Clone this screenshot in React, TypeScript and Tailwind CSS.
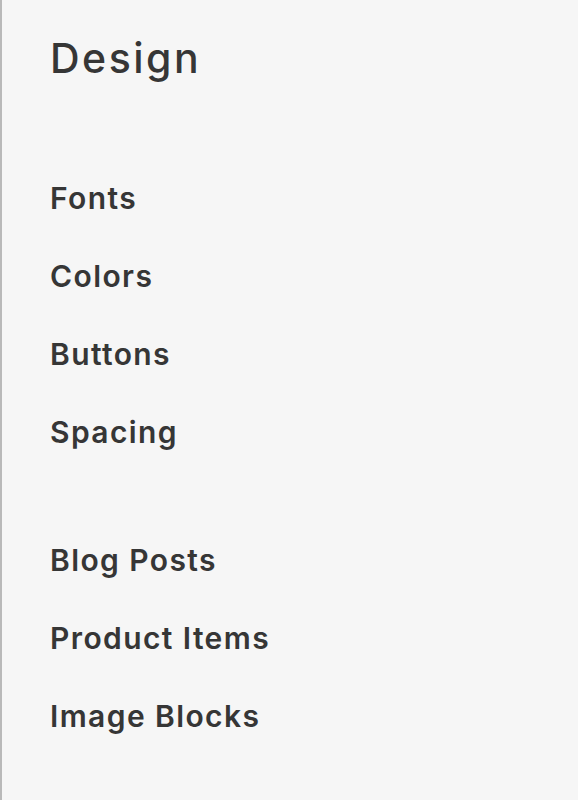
export default function App() {
  const first = ["Fonts", "Colors", "Buttons", "Spacing"];
  const second = ["Blog Posts", "Product Items", "Image Blocks"];
  return (
    <div className="h-[800px] w-[578px] border-l-2 border-[#b9b9b9] bg-[#f6f6f6] pl-[48px] pt-[38px] font-['Inter','Liberation_Sans',sans-serif] text-[#363636]">
      <h1 className="text-[41px] font-medium leading-[40px] tracking-[2.5px]">Design</h1>
      <ul className="mt-[81px]">
        {first.map((t) => (
          <li key={t} className="text-[30px] font-semibold leading-[78px] tracking-[1.4px]">
            {t}
          </li>
        ))}
      </ul>
      <ul className="mt-[50px]">
        {second.map((t) => (
          <li key={t} className="text-[30px] font-semibold leading-[78px] tracking-[1.4px]">
            {t}
          </li>
        ))}
      </ul>
    </div>
  );
}
